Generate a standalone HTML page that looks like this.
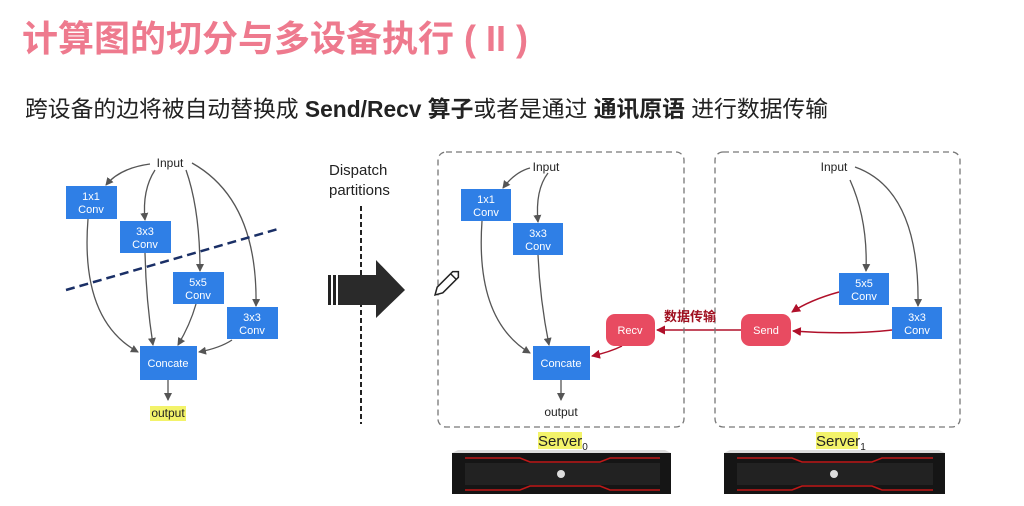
<!DOCTYPE html>
<html><head><meta charset="utf-8"><style>
html,body{margin:0;padding:0;background:#fff;width:1024px;height:506px;overflow:hidden;font-family:"Liberation Sans","Noto Sans CJK SC",sans-serif}
.t{position:absolute;left:22px;top:10px;font-size:36px;font-weight:bold;color:#ee7a8e;letter-spacing:0px;white-space:nowrap}
.s{position:absolute;left:25px;top:91px;font-size:22.8px;color:#222;white-space:nowrap}
.s b{font-weight:bold}
svg{position:absolute;left:0;top:0}
</style></head><body>
<div class="t">计算图的切分与多设备执行 ( II )</div>
<div class="s">跨设备的边将被自动替换成 <b>Send/Recv 算子</b>或者是通过 <b>通讯原语</b> 进行数据传输</div>
<svg width="1024" height="506" viewBox="0 0 1024 506" font-family="Liberation Sans, sans-serif">
<defs>
<marker id="ag" markerWidth="8" markerHeight="8" refX="7" refY="4" orient="auto" markerUnits="userSpaceOnUse"><path d="M0,0 L8,4 L0,8 z" fill="#555"/></marker>
<marker id="ar" markerWidth="9" markerHeight="9" refX="8" refY="4.5" orient="auto" markerUnits="userSpaceOnUse"><path d="M0,0 L9,4.5 L0,9 z" fill="#b0102a"/></marker>
</defs>
<g fill="none" stroke="#555" stroke-width="1.3" marker-end="url(#ag)">
<path d="M150,164 Q120,168 106,185"/>
<path d="M155,170 Q142,190 145,220"/>
<path d="M186,170 Q200,210 200,271"/>
<path d="M192,163 Q258,200 256,306"/>
<path d="M88,219 Q80,320 138,352"/>
<path d="M145,253 Q146,300 153,345"/>
<path d="M196,304 Q190,325 178,345"/>
<path d="M232,340 Q220,348 199,352"/>
<path d="M168,380 L168,400"/>
<path d="M530,168 Q515,172 503,188"/>
<path d="M548,173 Q535,190 538,222"/>
<path d="M482,221 Q475,320 530,353"/>
<path d="M538,255 Q540,300 549,345"/>
<path d="M561,380 L561,400"/>
<path d="M850,180 Q868,220 866,271"/>
<path d="M855,167 Q920,190 918,306"/>
</g>
<g fill="none" stroke="#b0102a" stroke-width="1.5" marker-end="url(#ar)">
<path d="M839,292 Q810,300 792,312"/>
<path d="M892,330 Q850,335 793,331"/>
<path d="M741,330 L657,330"/>
<path d="M622,346 Q610,352 592,356"/>
</g>
<line x1="66" y1="290" x2="278" y2="229" stroke="#1a2f66" stroke-width="2.5" stroke-dasharray="9,5"/>
<line x1="361" y1="206" x2="361" y2="424" stroke="#222" stroke-width="2" stroke-dasharray="5,3"/>
<rect x="438" y="152" width="246" height="275" rx="8" fill="none" stroke="#777" stroke-width="1.3" stroke-dasharray="6,4"/>
<rect x="715" y="152" width="245" height="275" rx="8" fill="none" stroke="#777" stroke-width="1.3" stroke-dasharray="6,4"/>
<rect x="328" y="275" width="3" height="30" fill="#222"/><rect x="333" y="275" width="3" height="30" fill="#222"/>
<path d="M338,275 L376,275 L376,260 L405,290 L376,318 L376,305 L338,305 z" fill="#2a2a2a"/>
<g transform="translate(440,290) rotate(-45)" fill="#fff" stroke="#222" stroke-width="1.5"><path d="M0,-4 L22,-4 L26,0 L22,4 L0,4 L-7,0 z"/><line x1="19" y1="-4" x2="19" y2="4"/></g>
<g font-size="11" fill="#fff" text-anchor="middle">
<rect x="66" y="186" width="51" height="33" fill="#2f7fe6"/><text x="91" y="200">1x1</text><text x="91" y="213">Conv</text>
<rect x="120" y="221" width="51" height="32" fill="#2f7fe6"/><text x="145" y="235">3x3</text><text x="145" y="248">Conv</text>
<rect x="173" y="272" width="51" height="32" fill="#2f7fe6"/><text x="198" y="286">5x5</text><text x="198" y="299">Conv</text>
<rect x="227" y="307" width="51" height="32" fill="#2f7fe6"/><text x="252" y="321">3x3</text><text x="252" y="334">Conv</text>
<rect x="140" y="346" width="57" height="34" fill="#2f7fe6"/><text x="168" y="367">Concate</text>
<rect x="461" y="189" width="50" height="32" fill="#2f7fe6"/><text x="486" y="203">1x1</text><text x="486" y="216">Conv</text>
<rect x="513" y="223" width="50" height="32" fill="#2f7fe6"/><text x="538" y="237">3x3</text><text x="538" y="250">Conv</text>
<rect x="533" y="346" width="57" height="34" fill="#2f7fe6"/><text x="561" y="367">Concate</text>
<rect x="839" y="273" width="50" height="32" fill="#2f7fe6"/><text x="864" y="287">5x5</text><text x="864" y="300">Conv</text>
<rect x="892" y="307" width="50" height="32" fill="#2f7fe6"/><text x="917" y="321">3x3</text><text x="917" y="334">Conv</text>
<rect x="606" y="314" width="49" height="32" rx="9" fill="#e84b61"/><text x="630" y="334">Recv</text>
<rect x="741" y="314" width="50" height="32" rx="9" fill="#e84b61"/><text x="766" y="334">Send</text>
</g>
<g font-size="12" fill="#222" text-anchor="middle">
<text x="170" y="167">Input</text><text x="546" y="171">Input</text><text x="834" y="171">Input</text>
<rect x="150" y="406" width="36" height="15" fill="#f3f36a"/><text x="168" y="417">output</text>
<text x="561" y="416">output</text>
</g>
<text x="329" y="175" font-size="15" fill="#222">Dispatch</text>
<text x="329" y="195" font-size="15" fill="#222">partitions</text>
<text x="664" y="321" font-size="13" fill="#a01020" font-family="Noto Sans CJK SC, sans-serif" font-weight="bold">数据传输</text>
<rect x="538" y="432" width="44" height="17" fill="#f3f36a"/><text x="538" y="446" font-size="15" fill="#222">Server<tspan font-size="10" dy="4">0</tspan></text>
<rect x="816" y="432" width="42" height="17" fill="#f3f36a"/><text x="816" y="446" font-size="15" fill="#222">Server<tspan font-size="10" dy="4">1</tspan></text>
<g>
<path d="M458,450 L665,450 L671,453 L452,453 z" fill="#ddd"/>
<rect x="452" y="453" width="219" height="41" fill="#151515"/>
<path d="M465,458 L520,458 L530,462 L600,462 L610,458 L660,458" stroke="#c01818" stroke-width="1.5" fill="none"/>
<path d="M465,490 L520,490 L530,486 L600,486 L610,490 L660,490" stroke="#c01818" stroke-width="1.5" fill="none"/>
<rect x="465" y="463" width="195" height="22" fill="#222"/>
<circle cx="561" cy="474" r="4" fill="#ddd"/>
<path d="M730,450 L939,450 L945,453 L724,453 z" fill="#ddd"/>
<rect x="724" y="453" width="221" height="41" fill="#151515"/>
<path d="M737,458 L792,458 L802,462 L872,462 L882,458 L933,458" stroke="#c01818" stroke-width="1.5" fill="none"/>
<path d="M737,490 L792,490 L802,486 L872,486 L882,490 L933,490" stroke="#c01818" stroke-width="1.5" fill="none"/>
<rect x="737" y="463" width="196" height="22" fill="#222"/>
<circle cx="834" cy="474" r="4" fill="#ddd"/>
</g>
</svg>
</body></html>
